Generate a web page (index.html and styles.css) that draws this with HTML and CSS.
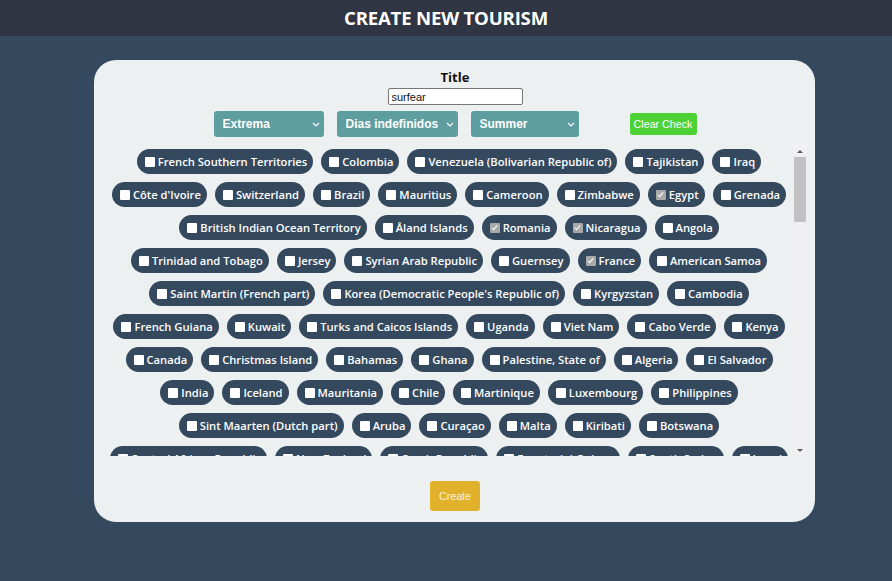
FILE: index.html
```html
<!DOCTYPE html>
<html lang="en">
<head>
<meta charset="utf-8">
<title>Create New Tourism</title>
<link rel="stylesheet" href="styles.css">
</head>
<body>
<header class="topbar"><h1>CREATE NEW TOURISM</h1></header>
<form class="card">
  <label class="title-label" for="title">Title</label>
  <input id="title" class="title-input" type="text" value="surfear">
  <div class="filters">
    <div class="select-wrap">
      <select class="select select-level"><option>Extrema</option></select>
      <svg class="chev" width="8" height="5" viewBox="0 0 8 5"><path d="M1 1l3 3 3-3" fill="none" stroke="#fff" stroke-width="1.2"/></svg>
    </div>
    <div class="select-wrap">
      <select class="select select-days"><option>Dias indefinidos</option></select>
      <svg class="chev" width="8" height="5" viewBox="0 0 8 5"><path d="M1 1l3 3 3-3" fill="none" stroke="#fff" stroke-width="1.2"/></svg>
    </div>
    <div class="select-wrap">
      <select class="select select-season"><option>Summer</option></select>
      <svg class="chev" width="8" height="5" viewBox="0 0 8 5"><path d="M1 1l3 3 3-3" fill="none" stroke="#fff" stroke-width="1.2"/></svg>
    </div>
    <button type="button" class="btn-clear">Clear Check</button>
  </div>
  <div class="countries-box">
  <div class="countries">
<label class="chip"><input type="checkbox">French Southern Territories</label>
<label class="chip"><input type="checkbox">Colombia</label>
<label class="chip"><input type="checkbox">Venezuela (Bolivarian Republic of)</label>
<label class="chip"><input type="checkbox">Tajikistan</label>
<label class="chip"><input type="checkbox">Iraq</label>
<label class="chip"><input type="checkbox">Côte d'Ivoire</label>
<label class="chip"><input type="checkbox">Switzerland</label>
<label class="chip"><input type="checkbox">Brazil</label>
<label class="chip"><input type="checkbox">Mauritius</label>
<label class="chip"><input type="checkbox">Cameroon</label>
<label class="chip"><input type="checkbox">Zimbabwe</label>
<label class="chip"><input type="checkbox" checked>Egypt</label>
<label class="chip"><input type="checkbox">Grenada</label>
<label class="chip"><input type="checkbox">British Indian Ocean Territory</label>
<label class="chip"><input type="checkbox">Åland Islands</label>
<label class="chip"><input type="checkbox" checked>Romania</label>
<label class="chip"><input type="checkbox" checked>Nicaragua</label>
<label class="chip"><input type="checkbox">Angola</label>
<label class="chip"><input type="checkbox">Trinidad and Tobago</label>
<label class="chip"><input type="checkbox">Jersey</label>
<label class="chip"><input type="checkbox">Syrian Arab Republic</label>
<label class="chip"><input type="checkbox">Guernsey</label>
<label class="chip"><input type="checkbox" checked>France</label>
<label class="chip"><input type="checkbox">American Samoa</label>
<label class="chip"><input type="checkbox">Saint Martin (French part)</label>
<label class="chip"><input type="checkbox">Korea (Democratic People's Republic of)</label>
<label class="chip"><input type="checkbox">Kyrgyzstan</label>
<label class="chip"><input type="checkbox">Cambodia</label>
<label class="chip"><input type="checkbox">French Guiana</label>
<label class="chip"><input type="checkbox">Kuwait</label>
<label class="chip"><input type="checkbox">Turks and Caicos Islands</label>
<label class="chip"><input type="checkbox">Uganda</label>
<label class="chip"><input type="checkbox">Viet Nam</label>
<label class="chip"><input type="checkbox">Cabo Verde</label>
<label class="chip"><input type="checkbox">Kenya</label>
<label class="chip"><input type="checkbox">Canada</label>
<label class="chip"><input type="checkbox">Christmas Island</label>
<label class="chip"><input type="checkbox">Bahamas</label>
<label class="chip"><input type="checkbox">Ghana</label>
<label class="chip"><input type="checkbox">Palestine, State of</label>
<label class="chip"><input type="checkbox">Algeria</label>
<label class="chip"><input type="checkbox">El Salvador</label>
<label class="chip"><input type="checkbox">India</label>
<label class="chip"><input type="checkbox">Iceland</label>
<label class="chip"><input type="checkbox">Mauritania</label>
<label class="chip"><input type="checkbox">Chile</label>
<label class="chip"><input type="checkbox">Martinique</label>
<label class="chip"><input type="checkbox">Luxembourg</label>
<label class="chip"><input type="checkbox">Philippines</label>
<label class="chip"><input type="checkbox">Sint Maarten (Dutch part)</label>
<label class="chip"><input type="checkbox">Aruba</label>
<label class="chip"><input type="checkbox">Curaçao</label>
<label class="chip"><input type="checkbox">Malta</label>
<label class="chip"><input type="checkbox">Kiribati</label>
<label class="chip"><input type="checkbox">Botswana</label>
<label class="chip"><input type="checkbox">Central African Republic</label>
<label class="chip"><input type="checkbox">New Zealand</label>
<label class="chip"><input type="checkbox">Czech Republic</label>
<label class="chip"><input type="checkbox">Equatorial Guinea</label>
<label class="chip"><input type="checkbox">South Sudan</label>
<label class="chip"><input type="checkbox">Israel</label>
<label class="chip"><input type="checkbox">Afghanistan</label>
<label class="chip"><input type="checkbox">Albania</label>
<label class="chip"><input type="checkbox">Andorra</label>
<label class="chip"><input type="checkbox">Anguilla</label>
<label class="chip"><input type="checkbox">Antarctica</label>
<label class="chip"><input type="checkbox">Antigua and Barbuda</label>
<label class="chip"><input type="checkbox">Argentina</label>
<label class="chip"><input type="checkbox">Armenia</label>
<label class="chip"><input type="checkbox">Australia</label>
<label class="chip"><input type="checkbox">Austria</label>
<label class="chip"><input type="checkbox">Azerbaijan</label>
<label class="chip"><input type="checkbox">Bahrain</label>
<label class="chip"><input type="checkbox">Bangladesh</label>
<label class="chip"><input type="checkbox">Barbados</label>
<label class="chip"><input type="checkbox">Belarus</label>
<label class="chip"><input type="checkbox">Belgium</label>
<label class="chip"><input type="checkbox">Belize</label>
<label class="chip"><input type="checkbox">Benin</label>
<label class="chip"><input type="checkbox">Bermuda</label>
<label class="chip"><input type="checkbox">Bhutan</label>
<label class="chip"><input type="checkbox">Bolivia (Plurinational State of)</label>
<label class="chip"><input type="checkbox">Bonaire, Sint Eustatius and Saba</label>
<label class="chip"><input type="checkbox">Bosnia and Herzegovina</label>
<label class="chip"><input type="checkbox">Bouvet Island</label>
<label class="chip"><input type="checkbox">Brunei Darussalam</label>
<label class="chip"><input type="checkbox">Bulgaria</label>
<label class="chip"><input type="checkbox">Burkina Faso</label>
<label class="chip"><input type="checkbox">Burundi</label>
<label class="chip"><input type="checkbox">Cayman Islands</label>
<label class="chip"><input type="checkbox">Chad</label>
<label class="chip"><input type="checkbox">China</label>
<label class="chip"><input type="checkbox">Cocos (Keeling) Islands</label>
<label class="chip"><input type="checkbox">Comoros</label>
<label class="chip"><input type="checkbox">Congo</label>
<label class="chip"><input type="checkbox">Congo (Democratic Republic of the)</label>
<label class="chip"><input type="checkbox">Cook Islands</label>
<label class="chip"><input type="checkbox">Costa Rica</label>
<label class="chip"><input type="checkbox">Croatia</label>
<label class="chip"><input type="checkbox">Cuba</label>
<label class="chip"><input type="checkbox">Cyprus</label>
<label class="chip"><input type="checkbox">Denmark</label>
<label class="chip"><input type="checkbox">Djibouti</label>
<label class="chip"><input type="checkbox">Dominica</label>
<label class="chip"><input type="checkbox">Dominican Republic</label>
<label class="chip"><input type="checkbox">Ecuador</label>
<label class="chip"><input type="checkbox">Eritrea</label>
<label class="chip"><input type="checkbox">Estonia</label>
<label class="chip"><input type="checkbox">Eswatini</label>
<label class="chip"><input type="checkbox">Ethiopia</label>
<label class="chip"><input type="checkbox">Falkland Islands (Malvinas)</label>
<label class="chip"><input type="checkbox">Faroe Islands</label>
<label class="chip"><input type="checkbox">Fiji</label>
<label class="chip"><input type="checkbox">Finland</label>
<label class="chip"><input type="checkbox">French Polynesia</label>
<label class="chip"><input type="checkbox">Gabon</label>
<label class="chip"><input type="checkbox">Gambia</label>
<label class="chip"><input type="checkbox">Georgia</label>
<label class="chip"><input type="checkbox">Germany</label>
<label class="chip"><input type="checkbox">Gibraltar</label>
<label class="chip"><input type="checkbox">Greece</label>
<label class="chip"><input type="checkbox">Greenland</label>
<label class="chip"><input type="checkbox">Guadeloupe</label>
<label class="chip"><input type="checkbox">Guam</label>
<label class="chip"><input type="checkbox">Guatemala</label>
<label class="chip"><input type="checkbox">Guinea</label>
<label class="chip"><input type="checkbox">Guinea-Bissau</label>
<label class="chip"><input type="checkbox">Guyana</label>
<label class="chip"><input type="checkbox">Haiti</label>
<label class="chip"><input type="checkbox">Heard Island and McDonald Islands</label>
<label class="chip"><input type="checkbox">Holy See</label>
<label class="chip"><input type="checkbox">Honduras</label>
<label class="chip"><input type="checkbox">Hong Kong</label>
<label class="chip"><input type="checkbox">Hungary</label>
<label class="chip"><input type="checkbox">Indonesia</label>
<label class="chip"><input type="checkbox">Iran (Islamic Republic of)</label>
<label class="chip"><input type="checkbox">Ireland</label>
<label class="chip"><input type="checkbox">Isle of Man</label>
<label class="chip"><input type="checkbox">Italy</label>
<label class="chip"><input type="checkbox">Jamaica</label>
<label class="chip"><input type="checkbox">Japan</label>
<label class="chip"><input type="checkbox">Jordan</label>
<label class="chip"><input type="checkbox">Kazakhstan</label>
<label class="chip"><input type="checkbox">Korea (Republic of)</label>
<label class="chip"><input type="checkbox">Lao People's Democratic Republic</label>
<label class="chip"><input type="checkbox">Latvia</label>
<label class="chip"><input type="checkbox">Lebanon</label>
<label class="chip"><input type="checkbox">Lesotho</label>
<label class="chip"><input type="checkbox">Liberia</label>
<label class="chip"><input type="checkbox">Libya</label>
<label class="chip"><input type="checkbox">Liechtenstein</label>
<label class="chip"><input type="checkbox">Lithuania</label>
<label class="chip"><input type="checkbox">Macao</label>
<label class="chip"><input type="checkbox">North Macedonia</label>
<label class="chip"><input type="checkbox">Madagascar</label>
<label class="chip"><input type="checkbox">Malawi</label>
<label class="chip"><input type="checkbox">Malaysia</label>
<label class="chip"><input type="checkbox">Maldives</label>
<label class="chip"><input type="checkbox">Mali</label>
<label class="chip"><input type="checkbox">Marshall Islands</label>
<label class="chip"><input type="checkbox">Mayotte</label>
<label class="chip"><input type="checkbox">Mexico</label>
<label class="chip"><input type="checkbox">Micronesia (Federated States of)</label>
<label class="chip"><input type="checkbox">Moldova (Republic of)</label>
<label class="chip"><input type="checkbox">Monaco</label>
<label class="chip"><input type="checkbox">Mongolia</label>
<label class="chip"><input type="checkbox">Montenegro</label>
<label class="chip"><input type="checkbox">Montserrat</label>
<label class="chip"><input type="checkbox">Morocco</label>
<label class="chip"><input type="checkbox">Mozambique</label>
<label class="chip"><input type="checkbox">Myanmar</label>
<label class="chip"><input type="checkbox">Namibia</label>
<label class="chip"><input type="checkbox">Nauru</label>
<label class="chip"><input type="checkbox">Nepal</label>
<label class="chip"><input type="checkbox">Netherlands</label>
<label class="chip"><input type="checkbox">New Caledonia</label>
<label class="chip"><input type="checkbox">Niger</label>
<label class="chip"><input type="checkbox">Nigeria</label>
<label class="chip"><input type="checkbox">Niue</label>
<label class="chip"><input type="checkbox">Norfolk Island</label>
<label class="chip"><input type="checkbox">Northern Mariana Islands</label>
<label class="chip"><input type="checkbox">Norway</label>
<label class="chip"><input type="checkbox">Oman</label>
<label class="chip"><input type="checkbox">Pakistan</label>
<label class="chip"><input type="checkbox">Palau</label>
<label class="chip"><input type="checkbox">Panama</label>
<label class="chip"><input type="checkbox">Papua New Guinea</label>
<label class="chip"><input type="checkbox">Paraguay</label>
<label class="chip"><input type="checkbox">Peru</label>
<label class="chip"><input type="checkbox">Pitcairn</label>
<label class="chip"><input type="checkbox">Poland</label>
<label class="chip"><input type="checkbox">Portugal</label>
<label class="chip"><input type="checkbox">Puerto Rico</label>
<label class="chip"><input type="checkbox">Qatar</label>
<label class="chip"><input type="checkbox">Réunion</label>
<label class="chip"><input type="checkbox">Russian Federation</label>
<label class="chip"><input type="checkbox">Rwanda</label>
<label class="chip"><input type="checkbox">Saint Barthélemy</label>
<label class="chip"><input type="checkbox">Saint Kitts and Nevis</label>
<label class="chip"><input type="checkbox">Saint Lucia</label>
<label class="chip"><input type="checkbox">Saint Pierre and Miquelon</label>
<label class="chip"><input type="checkbox">Saint Vincent and the Grenadines</label>
<label class="chip"><input type="checkbox">Samoa</label>
<label class="chip"><input type="checkbox">San Marino</label>
<label class="chip"><input type="checkbox">Sao Tome and Principe</label>
<label class="chip"><input type="checkbox">Saudi Arabia</label>
<label class="chip"><input type="checkbox">Senegal</label>
<label class="chip"><input type="checkbox">Serbia</label>
<label class="chip"><input type="checkbox">Seychelles</label>
<label class="chip"><input type="checkbox">Sierra Leone</label>
<label class="chip"><input type="checkbox">Singapore</label>
<label class="chip"><input type="checkbox">Slovakia</label>
<label class="chip"><input type="checkbox">Slovenia</label>
<label class="chip"><input type="checkbox">Solomon Islands</label>
<label class="chip"><input type="checkbox">Somalia</label>
<label class="chip"><input type="checkbox">South Africa</label>
<label class="chip"><input type="checkbox">Spain</label>
<label class="chip"><input type="checkbox">Sri Lanka</label>
<label class="chip"><input type="checkbox">Sudan</label>
<label class="chip"><input type="checkbox">Suriname</label>
<label class="chip"><input type="checkbox">Sweden</label>
<label class="chip"><input type="checkbox">Thailand</label>
<label class="chip"><input type="checkbox">Timor-Leste</label>
<label class="chip"><input type="checkbox">Togo</label>
<label class="chip"><input type="checkbox">Tonga</label>
<label class="chip"><input type="checkbox">Tunisia</label>
<label class="chip"><input type="checkbox">Turkey</label>
<label class="chip"><input type="checkbox">Turkmenistan</label>
<label class="chip"><input type="checkbox">Tuvalu</label>
<label class="chip"><input type="checkbox">Ukraine</label>
<label class="chip"><input type="checkbox">United Arab Emirates</label>
<label class="chip"><input type="checkbox">United States of America</label>
<label class="chip"><input type="checkbox">Uruguay</label>
<label class="chip"><input type="checkbox">Uzbekistan</label>
<label class="chip"><input type="checkbox">Vanuatu</label>
<label class="chip"><input type="checkbox">Wallis and Futuna</label>
<label class="chip"><input type="checkbox">Western Sahara</label>
<label class="chip"><input type="checkbox">Yemen</label>
<label class="chip"><input type="checkbox">Zambia</label>
  </div>
  <div class="scrollbar" aria-hidden="true">
    <span class="sb-btn"><span class="tri-up"></span></span>
    <span class="sb-track"><span class="sb-thumb"></span></span>
    <span class="sb-btn"><span class="tri-down"></span></span>
  </div>
  </div>
  <button type="submit" class="btn-create">Create</button>
</form>
</body>
</html>
```
FILE: styles.css
```css
html, body {
  margin: 0;
  padding: 0;
}

body {
  background: #34495e;
  font-family: "Open Sans", "Liberation Sans", sans-serif;
  min-height: 100vh;
}

.topbar {
  height: 36px;
  background: #2f3542;
  display: flex;
  align-items: center;
  justify-content: center;
}

.topbar h1 {
  margin: 0;
  padding-top: 1px;
  font: 700 18.6px/1 "Open Sans", sans-serif;
  color: #fff;
  letter-spacing: -0.2px;
}

.card {
  box-sizing: border-box;
  width: 721px;
  height: 462px;
  margin: 24px 0 0 94px;
  padding: 9px 9px 11px 10px;
  background: #ecf0f1;
  border-radius: 22px;
  display: flex;
  flex-direction: column;
  align-items: center;
}

.title-label {
  font: 700 13px/16px "Open Sans", sans-serif;
  color: #111;
}

.title-input {
  box-sizing: border-box;
  margin: 3px 0 0;
  width: 135px;
  height: 17px;
  padding: 0 3px;
  border: 1px solid #767676;
  border-radius: 2px;
  background: #fff;
  font: 11px "Liberation Sans", Arial, sans-serif;
  color: #111;
}

.filters {
  margin-top: 6px;
  display: flex;
  align-items: center;
  gap: 13px;
}

.select-wrap {
  position: relative;
  display: flex;
}

.select {
  appearance: none;
  -webkit-appearance: none;
  height: 26px;
  border: none;
  border-radius: 3px;
  background: #5f9ea0;
  color: #fff;
  font: 700 12px "Liberation Sans", Arial, sans-serif;
  padding: 0 18px 0 9px;
  margin: 0;
}

.select-level { width: 110px; }
.select-days { width: 121px; }
.select-season { width: 108px; }

.chev {
  position: absolute;
  right: 4px;
  top: 11px;
  pointer-events: none;
}

.btn-clear {
  margin-left: 38px;
  width: 67px;
  height: 22px;
  border: none;
  border-radius: 3px;
  background: #4cd137;
  color: #fff;
  font: 10.7px "Liberation Sans", Arial, sans-serif;
  padding: 0;
}

.countries-box {
  position: relative;
  align-self: stretch;
  margin-top: 8px;
  height: 311px;
}

.countries {
  box-sizing: border-box;
  height: 100%;
  padding-right: 12px;
  overflow-y: auto;
  scrollbar-width: none;
  display: flex;
  flex-wrap: wrap;
  justify-content: center;
  align-content: flex-start;
}

.countries::-webkit-scrollbar {
  display: none;
}

.scrollbar {
  position: absolute;
  top: 0;
  right: 0;
  bottom: 0;
  width: 12px;
  background: #f1f1f1;
  display: flex;
  flex-direction: column;
}

.sb-btn {
  height: 12px;
  flex: none;
  display: flex;
  align-items: center;
  justify-content: center;
}

.tri-up {
  width: 0;
  height: 0;
  border-left: 3px solid transparent;
  border-right: 3px solid transparent;
  border-bottom: 3px solid #5a5a5a;
}

.tri-down {
  width: 0;
  height: 0;
  border-left: 3px solid transparent;
  border-right: 3px solid transparent;
  border-top: 3px solid #5a5a5a;
}

.sb-track {
  flex: 1;
}

.sb-thumb {
  display: block;
  height: 65px;
  background: #c1c1c1;
}

.chip {
  display: inline-flex;
  align-items: center;
  height: 25px;
  margin: 4px;
  padding: 0 6px 0 8px;
  border-radius: 13px;
  background: #34495e;
  color: #fff;
  font: 600 11.2px/1 "Open Sans", sans-serif;
  white-space: nowrap;
}

.chip input {
  appearance: none;
  -webkit-appearance: none;
  position: relative;
  width: 10px;
  height: 10px;
  margin: 0 3px 0 0;
  background: #fff;
  border-radius: 1px;
  flex: none;
}

.chip input:checked {
  background: #a9a9a9;
}

.chip input:checked::before {
  content: "";
  position: absolute;
  left: 3px;
  top: 1px;
  width: 2px;
  height: 5px;
  border-right: 1.5px solid #fff;
  border-bottom: 1.5px solid #fff;
  transform: rotate(40deg);
}

.btn-create {
  margin-top: 25px;
  width: 50px;
  height: 30px;
  border: none;
  border-radius: 3px;
  background: #e1b12c;
  color: #fbf3dc;
  font: 10.7px "Liberation Sans", Arial, sans-serif;
  padding: 0;
}
```
